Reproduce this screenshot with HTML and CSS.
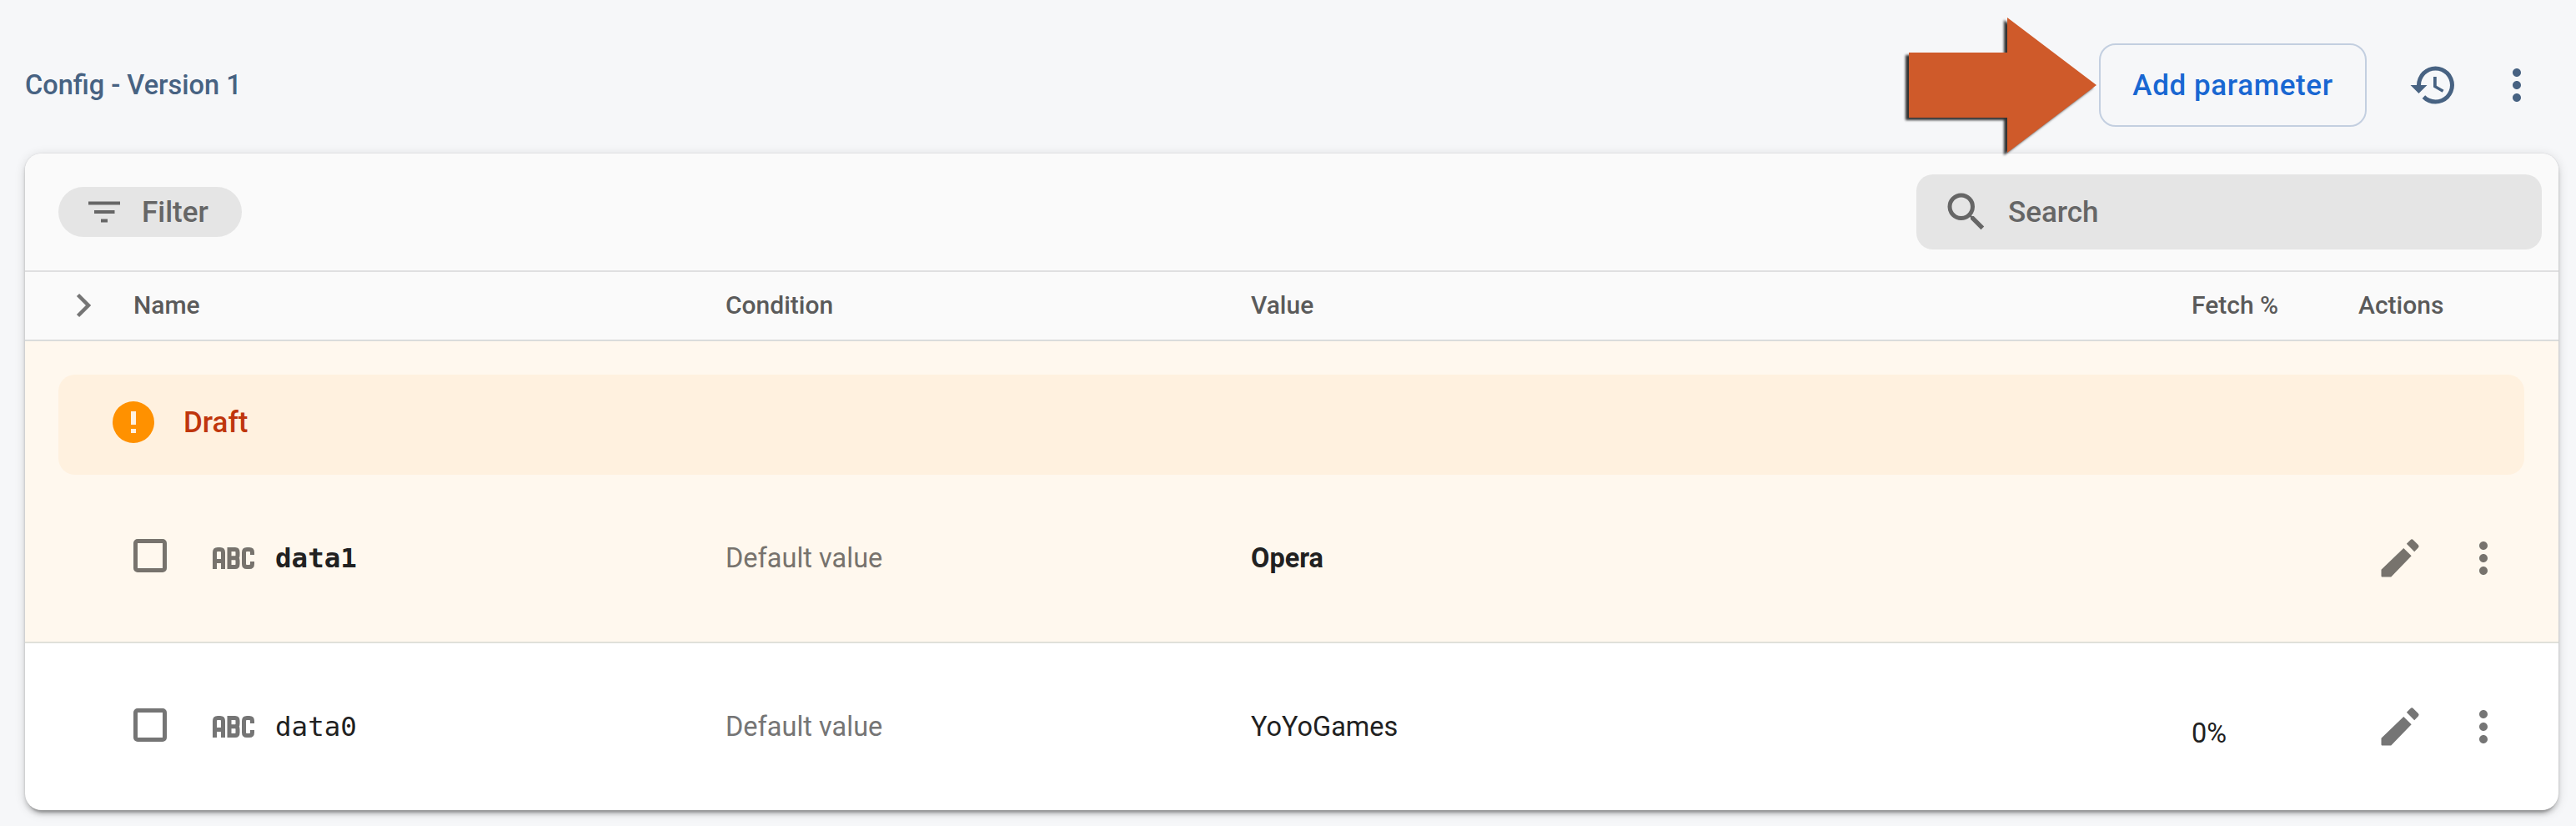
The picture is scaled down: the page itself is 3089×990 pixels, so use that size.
FILE: index.html
```html
<!DOCTYPE html>
<html lang="en">
<head>
<meta charset="utf-8">
<title>Config - Version 1</title>
<link rel="stylesheet" href="styles.css">
</head>
<body>
<svg class="defs" aria-hidden="true">
  <symbol id="more" viewBox="0 0 24 24"><path d="M12 8c1.1 0 2-.9 2-2s-.9-2-2-2-2 .9-2 2 .9 2 2 2zm0 2c-1.1 0-2 .9-2 2s.9 2 2 2 2-.9 2-2-.9-2-2-2zm0 6c-1.1 0-2 .9-2 2s.9 2 2 2 2-.9 2-2-.9-2-2-2z"/></symbol>
  <symbol id="edit" viewBox="0 0 24 24"><path d="M3 17.46v3.04c0 .28.22.5.5.5h4.2L17.46 10.9l-3.75-3.75L3 17.46zM20.71 7.04a.996.996 0 0 0 0-1.41l-2.34-2.34a.996.996 0 0 0-1.41 0l-1.83 1.83 3.75 3.75 1.83-1.83z"/></symbol>
  <symbol id="abc" viewBox="0 0 50 26"><g fill="none" stroke="currentColor" stroke-width="5"><path d="M2.5 26V6Q2.500 2.500 6 2.500H9Q12.500 2.500 12.500 6V26M2.500 16.500H12.500"/><path d="M20 2.500V23.500M17.500 2.500H27Q30 2.500 30 6V9.500Q30 12.800 27 12.800H20M27 12.800Q30 12.800 30 16V20Q30 23.500 27 23.500H17.500"/><path d="M47.500 9V6Q47.500 2.500 44 2.500H41Q37.500 2.500 37.500 6V20Q37.500 23.500 41 23.500H44Q47.500 23.500 47.500 20V17"/></g></symbol>
</svg>
<header class="topbar">
  <h1 class="title">Config - Version 1</h1>
  <button class="add">Add parameter
    <svg class="arrow" viewBox="0 0 240 180"><path d="M9 52H127V10L234 91L127 172V130H9Z"/></svg>
  </button>
  <svg class="icon history" viewBox="0 0 24 24"><path d="M13 3a9 9 0 0 0-9 9H1l3.890 3.890.070.140L9 12H6c0-3.870 3.130-7 7-7s7 3.130 7 7-3.130 7-7 7c-1.930 0-3.680-.790-4.940-2.060l-1.420 1.420A8.954 8.954 0 0 0 13 21a9 9 0 0 0 0-18zm-1 5v5l4.280 2.540.720-1.210-3.500-2.080V8H12z"/></svg>
  <svg class="icon"><use href="#more"/></svg>
</header>
<main class="card">
  <div class="toolbar">
    <button class="filter"><svg class="filter-icon" viewBox="0 0 38 26"><path d="M0 .5h38v4H0zM7 11h24.500v4H7zM15 21.500h8v4h-8z"/></svg><span class="label">Filter</span></button>
    <div class="search"><svg class="icon" viewBox="0 0 24 24"><path d="M15.500 14h-.790l-.280-.270A6.471 6.471 0 0 0 16 9.500 6.500 6.500 0 1 0 9.500 16c1.610 0 3.090-.590 4.230-1.570l.270.280v.790l5 4.990L20.490 19l-4.990-5zm-6 0C7.010 14 5 11.990 5 9.500S7.010 5 9.500 5 14 7.010 14 9.500 11.990 14 9.500 14z"/></svg><span class="label">Search</span></div>
  </div>
  <div class="row head">
    <svg class="chevron" viewBox="0 0 20 30"><path d="M2.500 2.500L15 15L2.500 27.500"/></svg>
    <span>Name</span><span>Condition</span><span>Value</span><span>Fetch %</span><span>Actions</span>
  </div>
  <section class="draft">
    <div class="banner"><svg class="icon alert" viewBox="0 0 24 24"><path d="M12 2a10 10 0 1 0 0 20 10 10 0 0 0 0-20zm1.200 15.200h-2.400v-2h2.400v2zm0-4h-2.400V6.800h2.400v6.400z"/></svg><span class="label">Draft</span></div>
    <div class="row item changed">
      <span></span>
      <span class="name"><i class="box"></i><svg class="abc"><use href="#abc"/></svg><code>data1</code></span>
      <span class="muted">Default value</span><span class="value">Opera</span><span></span>
      <span class="actions"><svg class="icon"><use href="#edit"/></svg><svg class="icon"><use href="#more"/></svg></span>
    </div>
  </section>
  <div class="row item">
    <span></span>
    <span class="name"><i class="box"></i><svg class="abc"><use href="#abc"/></svg><code>data0</code></span>
    <span class="muted">Default value</span><span class="value">YoYoGames</span><span class="fetch">0%</span>
    <span class="actions"><svg class="icon"><use href="#edit"/></svg><svg class="icon"><use href="#more"/></svg></span>
  </div>
</main>
</body>
</html>
```
FILE: styles.css
```css
* { box-sizing: border-box; }
body {
  margin: 0;
  height: 990px;
  overflow: hidden;
  background: #f6f7f9;
  color: #212121;
  font: 400 32.5px/50px Roboto, sans-serif;
}
.defs { position: absolute; width: 0; height: 0; }
button { font: inherit; border: 0; background: none; margin: 0; }
.icon { width: 60px; height: 60px; fill: currentColor; flex: none; display: block; }

.topbar {
  display: flex;
  align-items: center;
  height: 184px;
  padding: 20px 41px 0 30px;
  color: #476282;
}
.title { flex: 1; margin: 0; font-size: 32.5px; font-weight: 500; }
.add {
  position: relative;
  width: 321px;
  height: 100px;
  padding: 1px 0 0;
  margin-right: 50px;
  border: 2px solid #c3cfe0;
  border-radius: 20px;
  color: #1967d2;
  font-size: 35px;
  font-weight: 500;
  letter-spacing: .6px;
  white-space: nowrap;
}
.arrow {
  position: absolute;
  left: -239px;
  top: -43px;
  width: 240px;
  height: 180px;
  overflow: visible;
  fill: #cf5a2a;
  filter: drop-shadow(-4px 3px 1.5px rgba(0, 0, 0, .8));
}
.history { margin-right: 40px; }

.card {
  width: 3038px;
  height: 787px;
  margin-left: 30px;
  overflow: hidden;
  border-radius: 20px;
  background: #fff;
  box-shadow: 0 7.5px 2.5px -5px rgba(0,0,0,.2), 0 5px 5px rgba(0,0,0,.14), 0 2.5px 12.5px rgba(0,0,0,.14), 0 0 2px rgba(0,0,0,.12);
}
.toolbar {
  display: flex;
  align-items: center;
  justify-content: space-between;
  height: 142px;
  padding: 0 20px 0 40px;
  border-bottom: 2px solid #dfdfe0;
  background: #fafafa;
  color: #666;
  font-size: 35px;
  font-weight: 500;
}
.filter {
  display: flex;
  align-items: center;
  width: 220px;
  height: 60px;
  padding: 0 0 0 36px;
  gap: 26px;
  border-radius: 30px;
  background: #e5e5e5;
  color: #666;
}
.filter-icon { width: 38px; height: 26px; fill: #666; }
.search {
  display: flex;
  align-items: center;
  width: 750px;
  height: 90px;
  padding-left: 30px;
  gap: 20px;
  border-radius: 20px;
  background: #e5e5e5;
}
.row {
  display: grid;
  grid-template-columns: 130px 710px 630px 1128px 200px 240px;
  align-items: center;
}
.head {
  height: 83px;
  padding-bottom: 2px;
  border-bottom: 2px solid #dadcdc;
  background: #fafafa;
  color: #5a5a5a;
  font-size: 30px;
  font-weight: 500;
}
.chevron { width: 20px; height: 30px; margin-left: 61px; fill: none; stroke: #757575; stroke-width: 4.500; }
.draft { height: 362px; padding-top: 40px; border-bottom: 2px solid #e0e0da; background: #fff8ee; }
.banner {
  display: flex;
  align-items: center;
  height: 120px;
  margin: 0 41px 0 40px;
  padding: 0 0 6px 60px;
  gap: 30px;
  border-radius: 20px;
  background: #fff1df;
  color: #bf360c;
  font-size: 35px;
  font-weight: 500;
}
.label { padding-top: 2px; }
.alert { fill: #ff9100; }
.item { height: 200px; }
.name { display: flex; align-items: center; }
.box { width: 40px; height: 40px; margin: 0 55px 4px 0; border: 5px solid #757575; border-radius: 5px; }
.abc { width: 50px; height: 26px; margin-right: 25px; color: #757575; }
code { font: 400 32.5px/50px "DejaVu Sans Mono", monospace; }
.changed code, .changed .value { font-weight: 700; }
.muted { color: #757575; }
.fetch { padding-top: 16px; }
.actions { display: flex; gap: 40px; margin-left: 20px; color: #757575; }
.changed .icon, .changed .abc { color: #77736d; }
.changed .box { margin-bottom: 6px; border-color: #77736d; }
.changed .muted { color: #77736d; }
```
